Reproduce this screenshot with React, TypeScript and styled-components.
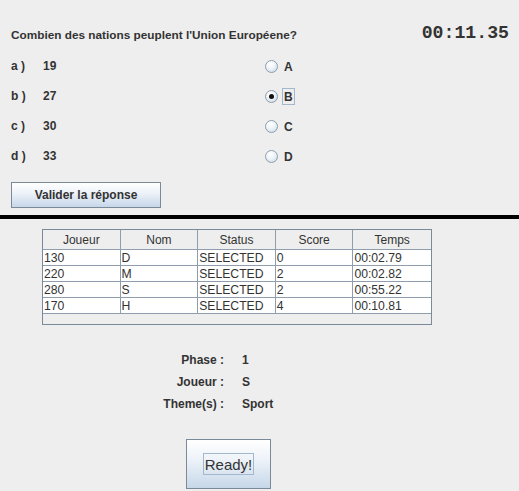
import React from 'react';
import styled, { createGlobalStyle } from 'styled-components';

const GlobalStyle = createGlobalStyle`
  html, body {
    margin: 0;
    padding: 0;
    background: #eeeeee;
  }
  body {
    font-family: "Liberation Sans", Arial, sans-serif;
    color: #333333;
  }
`;

interface Answer {
  key: string;
  value: string;
  letter: string;
}

const answers: Answer[] = [
  { key: 'a )', value: '19', letter: 'A' },
  { key: 'b )', value: '27', letter: 'B' },
  { key: 'c )', value: '30', letter: 'C' },
  { key: 'd )', value: '33', letter: 'D' },
];

const players = [
  ['130', 'D', 'SELECTED', '0', '00:02.79'],
  ['220', 'M', 'SELECTED', '2', '00:02.82'],
  ['280', 'S', 'SELECTED', '2', '00:55.22'],
  ['170', 'H', 'SELECTED', '4', '00:10.81'],
];

const columns = ['Joueur', 'Nom', 'Status', 'Score', 'Temps'];

function App() {
  const selected = 'B';

  return (
    <Frame>
      <GlobalStyle />
      <QuestionPanel>
        <Header>
          <Question>Combien des nations peuplent l'Union Européene?</Question>
          <Timer>00:11.35</Timer>
        </Header>
        <AnswerList>
          {answers.map((a) => (
            <AnswerRow key={a.letter}>
              <BoldText>{a.key}</BoldText>
              <BoldText>{a.value}</BoldText>
              <RadioOption>
                <RadioCircle $checked={a.letter === selected} />
                <RadioLabel $focused={a.letter === selected}>{a.letter}</RadioLabel>
              </RadioOption>
            </AnswerRow>
          ))}
        </AnswerList>
        <ValidateButton>Valider la réponse</ValidateButton>
      </QuestionPanel>
      <Divider />
      <LobbyPanel>
        <TableBox>
          <HeaderRow>
            {columns.map((c) => (
              <HeaderCell key={c}>{c}</HeaderCell>
            ))}
          </HeaderRow>
          {players.map((row) => (
            <BodyRow key={row[0]}>
              {row.map((cell, i) => (
                <BodyCell key={i}>{cell}</BodyCell>
              ))}
            </BodyRow>
          ))}
          <TableFiller />
        </TableBox>
        <InfoGrid>
          <InfoLabel>Phase :</InfoLabel>
          <BoldText>1</BoldText>
          <InfoLabel>Joueur :</InfoLabel>
          <BoldText>S</BoldText>
          <InfoLabel>Theme(s) :</InfoLabel>
          <BoldText>Sport</BoldText>
        </InfoGrid>
        <ReadyButton>
          <FocusText>Ready!</FocusText>
        </ReadyButton>
      </LobbyPanel>
    </Frame>
  );
}
export default App;

const Frame = styled.div`
  width: 519px;
  height: 491px;
  overflow: hidden;
  display: flex;
  flex-direction: column;
`;

const QuestionPanel = styled.div`
  display: flex;
  flex-direction: column;
  align-items: flex-start;
  height: 215px;
  padding: 0 10px 0 11px;
  box-sizing: border-box;
`;

const Header = styled.div`
  display: flex;
  justify-content: space-between;
  align-items: flex-start;
  align-self: stretch;
  margin-top: 25px;
`;

const Question = styled.div`
  font-size: 11.8px;
  font-weight: bold;
  line-height: 20px;
`;

const Timer = styled.div`
  font-family: "Liberation Mono", "Courier New", monospace;
  font-size: 18.2px;
  font-weight: bold;
  line-height: 16px;
  color: #333333;
`;

const AnswerList = styled.div`
  display: flex;
  flex-direction: column;
  margin-top: 6px;
`;

const AnswerRow = styled.div`
  display: grid;
  grid-template-columns: 32px 222px auto;
  align-items: center;
  height: 30px;
`;

const BoldText = styled.span`
  font-size: 12px;
  font-weight: bold;
  color: #333333;
`;

const RadioOption = styled.div`
  display: flex;
  align-items: center;
  gap: 4px;
`;

const RadioCircle = styled.span<{ $checked: boolean }>`
  position: relative;
  width: 11px;
  height: 11px;
  border-radius: 50%;
  border: 1px solid #8e9eae;
  background: radial-gradient(circle at 40% 30%, #ffffff 0%, #eef3f8 45%, #c4d3e2 100%);

  &::after {
    content: '';
    display: ${({ $checked }) => ($checked ? 'block' : 'none')};
    position: absolute;
    left: 3px;
    top: 3px;
    width: 5px;
    height: 5px;
    border-radius: 50%;
    background: #111111;
  }
`;

const RadioLabel = styled.span<{ $focused: boolean }>`
  font-size: 12px;
  font-weight: bold;
  line-height: 14px;
  padding: 1px 1px 0;
  border: 1px solid ${({ $focused }) => ($focused ? '#a3b8cc' : 'transparent')};
`;

const ValidateButton = styled.button`
  margin-top: 11px;
  width: 150px;
  height: 26px;
  padding: 0;
  border: 1px solid #7a8a99;
  background: linear-gradient(to bottom, #ffffff 0%, #eef3f9 40%, #c6d7e9 100%);
  font-family: "Liberation Sans", Arial, sans-serif;
  font-size: 12px;
  font-weight: bold;
  color: #333333;
`;

const Divider = styled.div`
  height: 4px;
  background: #000000;
`;

const LobbyPanel = styled.div`
  display: flex;
  flex-direction: column;
  align-items: flex-start;
`;

const TableBox = styled.div`
  margin: 10px 0 0 42px;
  width: 388px;
  border: 1px solid #7a8a99;
  background: #eeeeee;
`;

const HeaderRow = styled.div`
  display: grid;
  grid-template-columns: repeat(5, 1fr);
  height: 19px;
  border-bottom: 1px solid #8e9eae;
`;

const HeaderCell = styled.div`
  display: flex;
  align-items: center;
  justify-content: center;
  font-size: 12px;
  color: #333333;
  border-right: 1px solid #8e9eae;

  &:last-child {
    border-right: none;
  }
`;

const BodyRow = styled.div`
  display: grid;
  grid-template-columns: repeat(5, 1fr);
  height: 16px;
  background: #ffffff;
  border-bottom: 1px solid #8e9eae;
  box-sizing: border-box;
`;

const BodyCell = styled.div`
  display: flex;
  align-items: center;
  padding-left: 1px;
  font-size: 12.2px;
  color: #333333;
  border-right: 1px solid #8e9eae;

  &:last-child {
    border-right: none;
  }
`;

const TableFiller = styled.div`
  height: 10px;
`;

const InfoGrid = styled.div`
  display: grid;
  grid-template-columns: 224px auto;
  grid-auto-rows: 22px;
  column-gap: 18px;
  align-items: center;
  margin-top: 24px;
`;

const InfoLabel = styled.span`
  justify-self: end;
  font-size: 12px;
  font-weight: bold;
  color: #333333;
`;

const ReadyButton = styled.button`
  margin: 24px 0 0 186px;
  width: 85px;
  height: 50px;
  padding: 0;
  display: flex;
  align-items: center;
  justify-content: center;
  border: 1px solid #7a8a99;
  background: linear-gradient(to bottom, #ffffff 0%, #eef3f9 40%, #c6d7e9 100%);
`;

const FocusText = styled.span`
  font-family: "Liberation Sans", Arial, sans-serif;
  font-size: 15px;
  color: #333333;
  padding: 1px 1px 0;
  border: 1px solid #a3b8cc;
  line-height: 19px;
`;
